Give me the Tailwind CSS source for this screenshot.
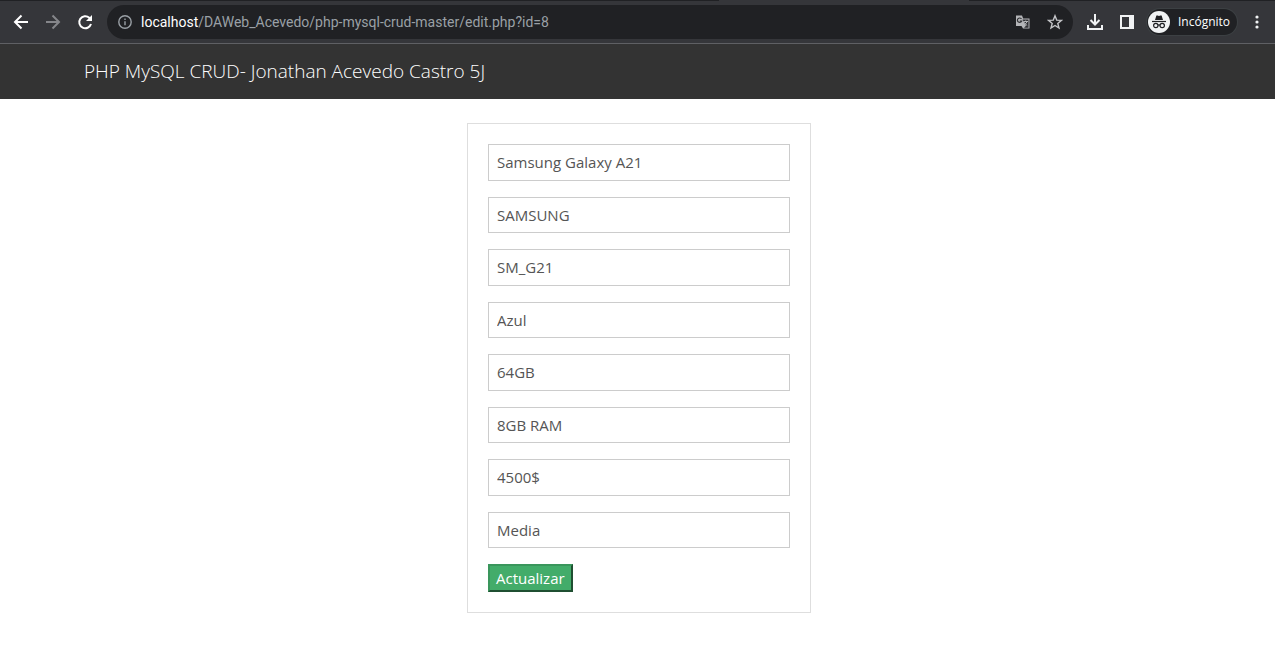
<!DOCTYPE html>
<html lang="es">
<head>
<meta charset="utf-8">
<meta name="viewport" content="width=device-width, initial-scale=1">
<title>PHP MySQL CRUD</title>
<script src="https://cdn.jsdelivr.net/npm/@tailwindcss/browser@4"></script>
</head>
<body class="min-h-screen bg-white font-['Open_Sans',sans-serif] text-[15px] text-[#222]">

<!-- Browser toolbar -->
<div class="border-b border-[#5f6064] bg-[#35363a]">
  <div class="flex h-px justify-between">
    <div class="w-[719px] bg-[#202124]"></div>
    <div class="w-[306px] bg-[#202124]"></div>
  </div>
  <div class="flex h-[42px] items-center pr-4 pl-[11px]">
    <button type="button" aria-label="Atrás" class="mr-3 size-5 text-white">
      <svg viewBox="0 0 20 20" class="size-5" fill="none" stroke="currentColor" stroke-width="2"><path d="M17 10H4.500M10.500 3.500L4 10l6.500 6.500"/></svg>
    </button>
    <button type="button" aria-label="Adelante" class="mr-3 size-5 text-[#85868a]">
      <svg viewBox="0 0 20 20" class="size-5" fill="none" stroke="currentColor" stroke-width="2"><path d="M3 10h12.500M9.500 3.500L16 10l-6.500 6.500"/></svg>
    </button>
    <button type="button" aria-label="Recargar" class="mr-3 size-5 text-white">
      <svg viewBox="0 0 20 20" class="size-5" fill="none" stroke="currentColor" stroke-width="2"><path d="M16 12A6 6 0 1 1 14.300 5.800L15.500 7"/><path d="M17 3v6h-6z" fill="currentColor" stroke="none"/></svg>
    </button>
    <div class="flex h-[34px] flex-1 items-center rounded-full bg-[#202124] pr-2 pl-[11px]">
      <svg viewBox="0 0 14 14" class="mr-[9px] size-3.5 shrink-0 text-[#9aa0a6]" fill="none" stroke="currentColor" stroke-width="1.400"><circle cx="7" cy="7" r="6.200"/><path d="M7 6.200v4M7 3.600v1.400"/></svg>
      <p class="flex-1 font-['Roboto',sans-serif] text-[14px] whitespace-nowrap text-[#9aa0a6]"><span class="text-white">localhost</span>/DAWeb_Acevedo/php-mysql-crud-master/edit.php?id=8</p>
      <button type="button" aria-label="Traducir" class="mr-4 size-4">
        <svg viewBox="0 0 16 16" class="size-4"><path d="M1 1.500h6l1.200 3H14.500v10H8L6.500 12H1z" fill="#b4b5b8"/><path d="M7.500 5.500h6v8.200H9l2-2z" fill="#303134"/><path d="M6.500 5A2.200 2.200 0 1 0 6.700 7H4.800" fill="none" stroke="#303134" stroke-width="1.200"/><path d="M8.500 7.500h4.500M10.700 6.500v1M12 7.500c-.4 1.500-1.300 2.600-2.500 3.300M9.500 8.500c.5 1.100 1.400 2.200 2.700 3" fill="none" stroke="#b4b5b8"/></svg>
      </button>
      <button type="button" aria-label="Marcador" class="mr-0.5 size-4">
        <svg viewBox="0 0 16 16" class="size-4" fill="none" stroke="#c4c5c8" stroke-width="1.400"><path d="M8 1.800l1.700 4.300 4.700.3-3.600 3 1.200 4.600L8 11.500 4 14l1.200-4.600-3.600-3 4.700-.3z"/></svg>
      </button>
    </div>
    <button type="button" aria-label="Descargas" class="ml-3 size-5 text-[#f1f3f4]">
      <svg viewBox="0 0 20 20" class="size-5" fill="none" stroke="currentColor" stroke-width="2"><path d="M10 2v10M5.500 8l4.500 4.500L14.500 8M3 13v4h14v-4"/></svg>
    </button>
    <button type="button" aria-label="Panel lateral" class="ml-3 size-5 text-[#f1f3f4]">
      <svg viewBox="0 0 20 20" class="size-5"><path fill="currentColor" fill-rule="evenodd" d="M3 3h14v14H3zM5 5v10h7V5z"/></svg>
    </button>
    <button type="button" class="ml-2.5 flex h-[26px] w-[90px] items-center gap-2 rounded-full bg-[#202124] pl-px text-[12px] text-white ring-1 ring-[#3c4043]">
      <svg viewBox="0 0 22 22" class="size-[22px] shrink-0"><circle cx="11" cy="11" r="11" fill="#f1f3f4"/><path d="M7 9l1.400-4.500h1.300L11 5l1.300-.5h1.300L15 9z" fill="#202124"/><path d="M4 10.500h14" stroke="#202124" stroke-width="1.200"/><g fill="none" stroke="#202124" stroke-width="1.200"><circle cx="7.800" cy="14.500" r="2.200"/><circle cx="14.200" cy="14.500" r="2.200"/><path d="M10 14.200q1-.7 2 0"/></g></svg>
      Incógnito
    </button>
    <button type="button" aria-label="Menú" class="ml-[18px] h-5 w-1 text-[#f1f3f4]">
      <svg viewBox="0 0 4 20" class="h-5 w-1" fill="currentColor"><circle cx="2" cy="5" r="1.600"/><circle cx="2" cy="10" r="1.600"/><circle cx="2" cy="15" r="1.600"/></svg>
    </button>
  </div>
</div>

<!-- Page -->
<nav class="bg-[#333] pl-[3px]">
  <div class="mx-auto flex h-[55px] max-w-[1140px] items-center px-[15px]">
    <a href="#" class="text-[19px] font-light text-white">PHP MySQL CRUD- Jonathan Acevedo Castro 5J</a>
  </div>
</nav>

<main class="py-6 pl-[3px]">
  <form class="mx-auto max-w-[344px] border border-[#dedede] p-5" onsubmit="return false">
    <div class="mb-4 flex flex-col gap-4">
      <input aria-label="Nombre" value="Samsung Galaxy A21" class="border border-[#ccc] px-2 py-1.5 leading-normal text-[#555]">
      <input aria-label="Marca" value="SAMSUNG" class="border border-[#ccc] px-2 py-1.5 leading-normal text-[#555]">
      <input aria-label="Modelo" value="SM_G21" class="border border-[#ccc] px-2 py-1.5 leading-normal text-[#555]">
      <input aria-label="Color" value="Azul" class="border border-[#ccc] px-2 py-1.5 leading-normal text-[#555]">
      <input aria-label="Almacenamiento" value="64GB" class="border border-[#ccc] px-2 py-1.5 leading-normal text-[#555]">
      <input aria-label="Memoria RAM" value="8GB RAM" class="border border-[#ccc] px-2 py-1.5 leading-normal text-[#555]">
      <input aria-label="Precio" value="4500$" class="border border-[#ccc] px-2 py-1.5 leading-normal text-[#555]">
      <input aria-label="Gama" value="Media" class="border border-[#ccc] px-2 py-1.5 leading-normal text-[#555]">
    </div>
    <button type="submit" class="block h-7 border-2 border-t-[#3a965c] border-r-[#1f4f31] border-b-[#1f4f31] border-l-[#3a965c] bg-[#43ac6a] px-1.5 leading-normal text-white">Actualizar</button>
  </form>
</main>
</body>
</html>
